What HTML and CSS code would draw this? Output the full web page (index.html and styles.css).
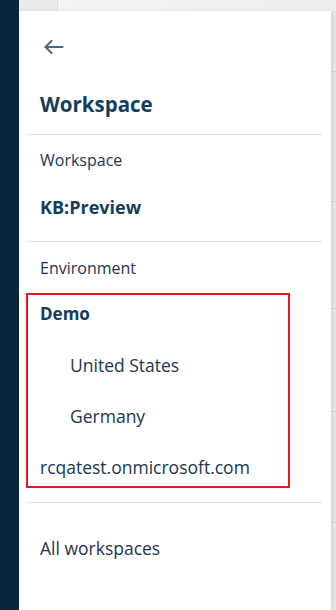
FILE: index.html
```html
<!DOCTYPE html>
<html lang="en">
<head>
  <meta charset="UTF-8">
  <title>Workspace</title>
  <link rel="stylesheet" href="styles.css">
</head>
<body>

  <!-- Left rail -->
  <div class="rail"></div>

  <div class="main">
    <!-- Top Bar -->
    <div class="top-bar">
      <div class="top-tab"></div>
      <div class="top-rest"></div>
    </div>

    <div class="stage">
      <!-- Workspace drawer -->
      <div class="drawer">
        <button class="back-btn" aria-label="Back">
          <svg width="20" height="14" viewBox="0 0 20 14" fill="none" stroke="#4a687e" stroke-width="2" stroke-linecap="round" stroke-linejoin="round">
            <path d="M1.5 7H18.5"/>
            <path d="M7.5 1L1.5 7L7.5 13"/>
          </svg>
        </button>

        <h1 class="drawer-title">Workspace</h1>

        <div class="divider"></div>

        <div class="section">
          <div class="label">Workspace</div>
          <div class="current">KB:Preview</div>
        </div>

        <div class="divider"></div>

        <div class="section env">
          <div class="label">Environment</div>
        </div>

        <ul class="env-list">
          <li class="env-item strong">Demo</li>
          <li class="env-item sub">United States</li>
          <li class="env-item sub">Germany</li>
          <li class="env-item">rcqatest.onmicrosoft.com</li>
        </ul>

        <div class="divider after-list"></div>

        <div class="all-link">All workspaces</div>
      </div>

      <!-- Page behind the drawer -->
      <div class="page-edge">
        <div class="edge-row r1"></div>
        <div class="edge-row r2"></div>
        <div class="edge-row r3"></div>
        <div class="edge-row r4"></div>
        <div class="edge-row r5"></div>
      </div>
    </div>
  </div>

</body>
</html>
```

FILE: styles.css
```css
* {
  box-sizing: border-box;
  margin: 0;
  padding: 0;
}

body, html {
  height: 100%;
}

body {
  display: flex;
  font-family: "Open Sans", "Lato", sans-serif;
  color: #1c3550;
  background: #f1f2f4;
  overflow: hidden;
}

.rail {
  width: 19px;
  flex: none;
  background: #0b263c;
}

.main {
  flex: 1;
  display: flex;
  flex-direction: column;
}

.top-bar {
  height: 11px;
  display: flex;
  flex: none;
}

.top-tab {
  width: 39px;
  background: #e9ebee;
  border-right: 1px solid #d9dde1;
}

.top-rest {
  flex: 1;
  background: linear-gradient(to right, #f3f4f6, #eceef0);
}

.stage {
  flex: 1;
  display: flex;
}

.drawer {
  width: 312px;
  flex: none;
  background: #ffffff;
  padding-top: 26px;
  box-shadow: 2px 0 4px rgba(0, 0, 0, 0.08);
  position: relative;
  z-index: 1;
}

.back-btn {
  display: block;
  margin-left: 25px;
  height: 20px;
  padding-top: 3px;
  border: none;
  background: none;
  cursor: pointer;
}

.drawer-title {
  margin-top: 35px;
  padding-left: 21px;
  font-size: 20.5px;
  line-height: 24px;
  font-weight: bold;
  color: #133d5b;
}

.divider {
  height: 1px;
  margin: 18px 9px 0 8px;
  background: #dde2e7;
}

.section {
  padding-left: 21px;
  padding-top: 15px;
}

.label {
  font-size: 16px;
  line-height: 20px;
}

.current {
  margin-top: 27px;
  margin-bottom: 24px;
  font-size: 18px;
  line-height: 20px;
  font-weight: bold;
  color: #133d5b;
}

.env {
  padding-top: 16px;
}

.env-list {
  list-style: none;
  margin: 15px 0 0 7px;
  width: 264px;
  border: 2px solid #e8171f;
  padding: 9px 0 9px 12px;
  display: flex;
  flex-direction: column;
  gap: 31px;
}

.env-item {
  font-size: 17.5px;
  line-height: 20px;
}

.env-item.strong {
  font-weight: bold;
  font-size: 17px;
  color: #133d5b;
}

.env-item.sub {
  padding-left: 30px;
}

.divider.after-list {
  margin-top: 14px;
}

.all-link {
  padding: 35px 0 0 21px;
  font-size: 17.5px;
  line-height: 20px;
}

.page-edge {
  flex: 1;
  background: #e5e8eb;
}

.edge-row {
  border-bottom: 1px solid #cfd4d9;
}

.r1 { height: 61px; }
.r2 { height: 130px; }
.r3 { height: 107px; }
.r4 { height: 103px; }
.r5 { height: 111px; }
```
